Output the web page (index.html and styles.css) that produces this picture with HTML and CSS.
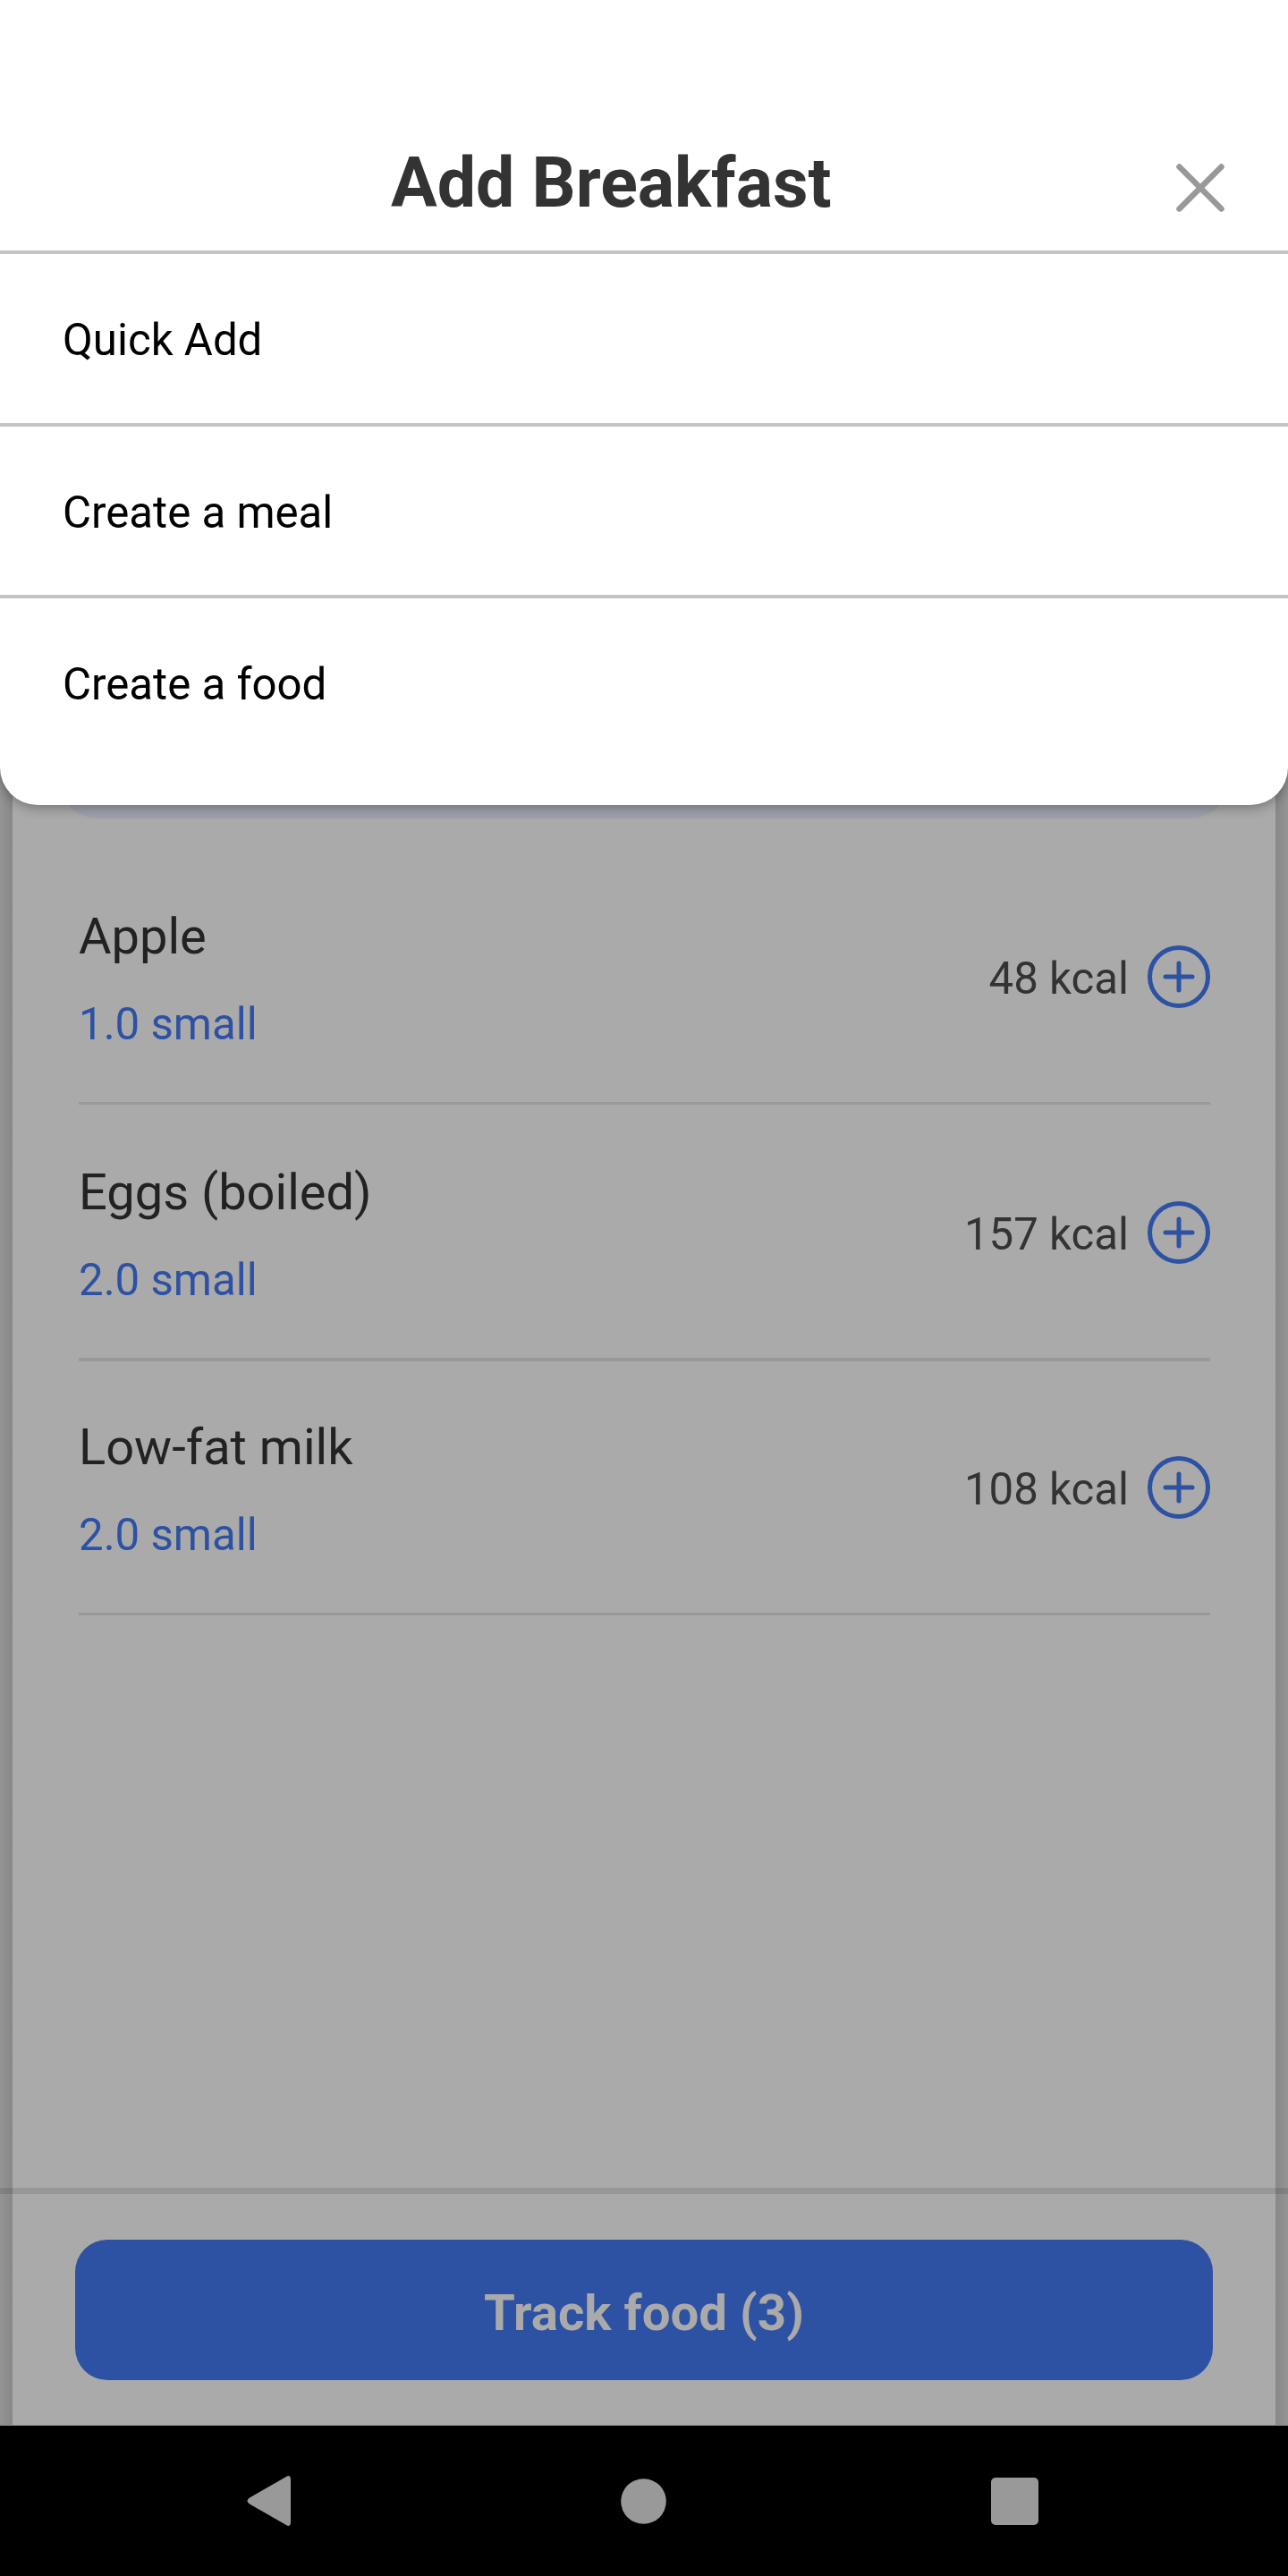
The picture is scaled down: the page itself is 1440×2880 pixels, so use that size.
FILE: index.html
```html
<!DOCTYPE html>
<html lang="en">
<head>
<meta charset="utf-8">
<title>Add Breakfast</title>
<link rel="stylesheet" href="styles.css">
</head>
<body>
<div class="screen">
  <main class="page">
    <div class="search"></div>
    <section class="foods">
      <article class="food"><div><h2>Apple</h2><p>1.0 small</p></div><div class="energy"><span>48 kcal</span><svg class="plus" viewBox="0 0 70 70"><circle cx="35" cy="35" r="32.5"/><path d="M35 20v30M20 35h30"/></svg></div></article>
      <article class="food"><div><h2>Eggs (boiled)</h2><p>2.0 small</p></div><div class="energy"><span>157 kcal</span><svg class="plus" viewBox="0 0 70 70"><circle cx="35" cy="35" r="32.5"/><path d="M35 20v30M20 35h30"/></svg></div></article>
      <article class="food"><div><h2>Low-fat milk</h2><p>2.0 small</p></div><div class="energy"><span>108 kcal</span><svg class="plus" viewBox="0 0 70 70"><circle cx="35" cy="35" r="32.5"/><path d="M35 20v30M20 35h30"/></svg></div></article>
    </section>
  </main>
  <footer class="footer"><button class="track">Track food (3)</button></footer>
  <nav class="nav">
    <svg class="back" viewBox="0 0 49 56"><path d="M44 1Q49-2 49 5V51Q49 58 44 55L3 31.500Q-2 28 3 24.500Z"/></svg>
    <svg class="home" viewBox="0 0 51 51"><circle cx="25.500" cy="25.500" r="25.300"/></svg>
    <svg class="recent" viewBox="0 0 53 53"><rect width="53" height="53" rx="5"/></svg>
  </nav>
  <section class="sheet">
    <header class="head"><h1>Add Breakfast</h1><svg class="close" viewBox="0 0 54 54"><path d="M3.500 3.500l47 47M50.500 3.500l-47 47"/></svg></header>
    <div class="option">Quick Add</div>
    <div class="option">Create a meal</div>
    <div class="option">Create a food</div>
  </section>
</div>
</body>
</html>
```
FILE: styles.css
```css
* { box-sizing: border-box; margin: 0; }
body { font-family: Roboto, sans-serif; background: #aaa; }
.screen {
  position: relative; width: 1440px; height: 2880px; display: flex; flex-direction: column; overflow: hidden;
  background: linear-gradient(to right, #949494, #888 14px, #aaa 14px, #aaa 1426px, #888 1426px, #949494);
}
.page { height: 2446px; padding: 0 66px; }
.search { height: 915px; border-radius: 42px; background: #9fa2ab; }
.foods { padding: 34px 21px 0 22px; }
.food { display: flex; justify-content: space-between; height: 286px; padding-top: 63px; border-bottom: 3px solid #999; }
.food:nth-child(2) { height: 287px; border-bottom-width: 4px; }
.food:nth-child(3) { height: 284px; padding-top: 61px; }
.food h2 { font-size: 56px; line-height: 70px; font-weight: 400; color: #222; }
.food p { margin-top: 33px; font-size: 49.2px; line-height: 60px; color: #2d51a3; }
.energy { display: flex; gap: 21px; height: 70px; margin-top: 45px; align-items: center; font-size: 49.2px; color: #333; }
.energy span { padding-top: 3px; }
.plus { width: 70px; height: 70px; fill: none; stroke: #2d51a3; stroke-width: 5; stroke-linecap: round; }
.footer { height: 266px; padding: 51px 84px 0; border-top: 7px solid rgba(0, 0, 0, .11); border-bottom: 1px solid #888; }
.track { display: block; width: 100%; height: 157px; padding: 7px 0 0; border: 0; border-radius: 36px; background: #2d51a3; color: #aaa; font: 700 56.400px Roboto, sans-serif; }
.nav { height: 168px; background: #000; display: flex; align-items: center; padding-left: 276px; }
.nav svg { fill: #999; flex: none; }
.back { width: 49px; height: 56px; }
.home { width: 51px; height: 51px; margin-left: 369px; }
.recent { width: 53px; height: 53px; margin-left: 363px; }
.sheet { position: absolute; top: 0; left: 0; width: 1440px; height: 900px; background: #fff; border-radius: 0 0 42px 42px; box-shadow: 0 3px 14px rgba(0, 0, 0, .32); }
.head { height: 280px; padding: 157px 71px 0 437px; display: flex; justify-content: space-between; }
.head h1 { font-size: 77px; line-height: 96px; font-weight: 700; color: #333; }
.close { width: 54px; height: 54px; margin-top: 26px; fill: none; stroke: #999; stroke-width: 6.500; stroke-linecap: round; }
.option { height: 192px; border-top: 4px solid #c4c4c4; padding-left: 70px; font-size: 49.2px; line-height: 192px; color: #000; }
.option:nth-child(2) { height: 193px; }
```
